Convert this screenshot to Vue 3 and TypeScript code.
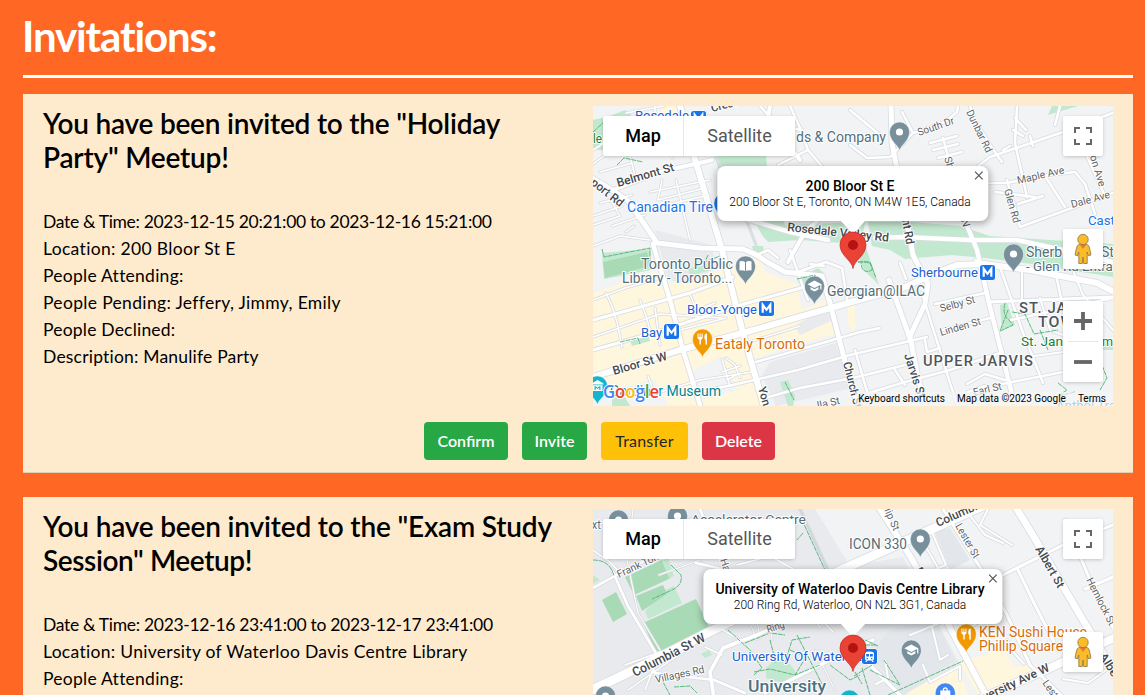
<script setup lang="ts">
interface Road { w: number; d: string; c?: string }
interface Area { f: string; d: string }
interface Label {
  t: string
  x: number
  y: number
  w: number
  s: number
  kind: string
  r?: number
}
interface Pin { x: number; y: number; f: string; icon: string }
interface Badge { x: number; y: number; icon: string }
interface MapData {
  top: number
  ground: string
  areas: Area[]
  roads: Road[]
  paths: string[]
  labels: Label[]
  pins: Pin[]
  badges: Badge[]
}
interface Line { text: string; ls: number }
interface Invitation {
  id: string
  title: Line[]
  details: Line[]
  place: string
  address: string
  map: MapData
}

const GREEN = '#c3e8d0'
const FIELD = '#a8dab5'
const YELLOW = '#fef6dd'
const SLATE = '#78909c'
const GREY = '#e8eaed'

const toronto: MapData = {
  top: 106,
  ground: '#f1f3f4',
  areas: [
    { f: YELLOW, d: 'M593 293L658 270L668 284L735 266L760 258L765 272L797 284L802 310L828 298L838 333L780 350L750 360L760 405H668L655 380L593 393Z' },
    { f: YELLOW, d: 'M660 106H680L686 124L666 128ZM848 305L855 303V335L848 325Z' },
    { f: '#f1f3f4', d: 'M690 372L720 357L738 390L700 400Z' },
    { f: GREY, d: 'M770 362L836 343L852 388L776 406L762 375ZM828 306L833 320L800 335L795 326Z' },
    { f: GREY, d: 'M655 230L712 245L716 268L690 284L668 280Z' },
    { f: GREEN, d: 'M602 253L650 249L651 270L604 279Z' },
    { f: FIELD, d: 'M603 262L647 252L650 266L605 278Z' },
    { f: GREEN, d: 'M593 120L610 116L625 110L632 116L603 132V150H593Z' },
    { f: GREEN, d: 'M714 154L766 154L768 180L785 225L865 222L862 240L866 250L842 243L800 240L768 242L762 235L755 222L743 212L722 180Z' },
    { f: GREEN, d: 'M868 222H912L960 226L990 236L1113 244V277L1070 270L1040 265L985 258L952 255L905 259L890 250L872 246Z' },
    { f: GREEN, d: 'M855 250L866 248L879 285L864 270ZM752 246L763 246L764 254L755 256Z' },
    { f: GREEN, d: 'M1048 115L1078 106H1052ZM630 340L648 334L650 341L632 346Z' },
    { f: GREEN, d: 'M688 269L712 262L714 269L690 276ZM780 382L788 380L795 396L793 406H788ZM797 279L818 268L824 273L804 292ZM1000 305L1007 303L1015 325L1002 331ZM1063 340H1113V350H1063ZM612 400L622 392L630 406H612Z' },
  ],
  roads: [
    { w: 1.5, d: 'M593 164L612 150L630 156L636 180M600 172L632 163M608 195L620 216L593 225M612 226L645 215M600 203L632 195M626 232L634 226M655 106V124L610 139L593 150M626 113L664 106M668 128L672 158M676 180L690 240M705 112L720 150M593 246L620 236L650 240M650 192L710 180M662 180L658 200L705 188M666 205L709 195M593 216L622 206' },
    { w: 1.5, d: 'M593 300L625 288L660 278M606 293L612 306L617 322L622 347M640 300L646 316L650 330M593 337L660 314L722 318M655 308L660 345M680 330L726 318M726 358L735 365L740 378M722 359L730 386M722 372L740 366M727 380L738 374M740 345L800 326M690 295L697 310L715 303M648 376L655 395M660 392L700 380L752 372' },
    { w: 1.5, d: 'M714 154L735 190L756 245', c: '#dde0e4' },
    { w: 3, d: 'M593 320L626 311L690 293L733 277M593 350L657 332L737 306L822 282' },
    { w: 2.5, d: 'M695 393L737 384L798 370L850 355L927 337M756 362L812 346L860 332L880 328M765 398L800 388L853 378L905 365' },
    { w: 2.5, d: 'M790 250L802 284L808 300M755 256L768 250L778 258M810 264L824 266M798 272L826 262L842 268L848 305' },
    { w: 2.5, d: 'M862 395L905 382L950 370L1003 352M940 348L927 352L925 340M922 293L935 335L957 405M935 304L985 293M943 330L990 318M997 385L1063 372M1000 267L1022 330L1043 383M1011 320L1113 298M1055 270L1061 298M900 263L906 279M855 350L868 395M895 370L905 385M967 384L985 374L1005 380M968 392L985 386L990 404' },
    { w: 2, d: 'M1005 360L1063 352M1022 268L1022 300M975 260L1000 266M1040 298L1050 330L1063 335M1072 268L1083 295L1113 330' },
    { w: 2.5, d: 'M790 106L800 128L808 150L778 165M808 150L830 176M760 106L778 126L802 130M850 110L880 135M850 145L867 158L890 157L913 133L945 122L957 112L958 106M902 112L913 133M930 143L957 136M933 150L958 144M938 158L962 152M943 138L954 178L963 216' },
    { w: 2.5, d: 'M977 167L990 157L1063 132L1113 113M970 106L975 120L990 145L1002 162M1017 106L1015 143L1027 197M1007 180L1020 227L1113 193M983 183L1007 183L1040 176L1075 172L1085 184L1095 214M1045 176L1065 207M1015 118L1026 130M1013 130L1023 136M1010 146L1003 150M1030 136L1033 146M1060 106L1055 125M1085 152L1105 196M995 192L1035 197M1018 204L1043 196' },
    { w: 5, d: 'M590 177L612 190L627 200L645 225L657 243L700 248L743 249L755 254L767 262L785 272L822 276L830 303L853 393L862 410' },
    { w: 4, d: 'M613 190L660 172L712 160M770 106L768 118L800 160M820 218L805 232L788 262' },
    { w: 4.5, d: 'M743 218L790 232L828 240M875 238L905 237L970 240L1017 240L1063 250L1113 262' },
    { w: 4.5, d: 'M653 244L670 300L683 350L700 405' },
    { w: 6, d: 'M593 377L680 350L750 331L855 301L903 288L933 274L957 265L983 264L1030 270L1097 283L1116 293' },
    { w: 6, d: 'M680 106L694 156L722 250L743 333L765 410' },
    { w: 5, d: 'M891 106L892 143L903 200L913 255L928 284L925 304L910 336L918 378L927 410M889 280L907 330L912 345' },
    { w: 4.5, d: 'M957 196L963 216L977 250L990 307L1014 402' },
    { w: 3, d: 'M988 302L1113 297' },
  ],
  paths: [
    'M593 132L603 123M617 165L624 158L643 162M602 249L604 257L650 248V262M858 262L870 262L876 278M858 262Q873 260 872 270Q862 275 861 263',
    'M1005 303Q1002 315 1009 320L1013 325L1000 331L1008 310M1012 312L1025 314L1034 334L1058 330M1040 330L1048 350M1058 383L1067 390L1058 396L1075 392M1100 360L1107 378L1100 390M785 382L794 400M797 279L815 275L818 292M708 255L705 262L720 256M620 342L638 338L640 344',
  ],
  labels: [
    { t: 'Rosedale', x: 635, y: 120, w: 54, s: 13, kind: 'transit' },
    { t: 'Cresc', x: 712, y: 112, w: 28, s: 11, kind: 'street', r: -14 },
    { t: 'le', x: 593, y: 143, w: 9, s: 13, kind: 'park' },
    { t: 'ds & Company', x: 796, y: 142, w: 90, s: 14, kind: 'poi' },
    { t: 'Belmont St', x: 618, y: 187, w: 59, s: 12, kind: 'street', r: -16 },
    { t: 'port Rd', x: 590, y: 184, w: 38, s: 12, kind: 'street', r: 38 },
    { t: 'Canadian Tire', x: 627, y: 212, w: 86, s: 14, kind: 'shop' },
    { t: 'South Dr', x: 919, y: 136, w: 38, s: 10.5, kind: 'minor', r: -19 },
    { t: 'Dunbar Rd', x: 966, y: 112, w: 46, s: 10.5, kind: 'minor', r: 64 },
    { t: 'She', x: 944, y: 158, w: 18, s: 10.5, kind: 'minor', r: 72 },
    { t: 'Maple Ave', x: 1018, y: 184, w: 48, s: 10.5, kind: 'minor', r: -13 },
    { t: 'Glen Rd', x: 1004, y: 190, w: 35, s: 10.5, kind: 'minor', r: 74 },
    { t: 'son Ave', x: 1088, y: 151, w: 38, s: 10.5, kind: 'minor', r: 73 },
    { t: 'Dale Ave', x: 1072, y: 208, w: 40, s: 10.5, kind: 'minor', r: -15 },
    { t: 'Castle', x: 1088, y: 225, w: 37, s: 13, kind: 'shop' },
    { t: 'Rosedale Valley Rd', x: 787, y: 231, w: 102, s: 12, kind: 'street', r: 6 },
    { t: 'nt Rd', x: 902, y: 220, w: 25, s: 12, kind: 'street', r: 80 },
    { t: 'N', x: 961, y: 220, w: 8, s: 11, kind: 'minor', r: 75 },
    { t: 'Toronto Public', x: 641, y: 269, w: 92, s: 14, kind: 'poi' },
    { t: 'Library - Toronto...', x: 622, y: 283, w: 110, s: 14, kind: 'poi' },
    { t: 'Georgian@ILAC', x: 827, y: 296, w: 98, s: 14, kind: 'poi' },
    { t: 'Sherb', x: 1026, y: 257, w: 36, s: 14, kind: 'poi' },
    { t: 'St', x: 1101, y: 257, w: 13, s: 14, kind: 'poi' },
    { t: '- Glen Rd Entrance', x: 1026, y: 271, w: 108, s: 13.5, kind: 'poi' },
    { t: 'Sherbourne', x: 911, y: 277, w: 67, s: 13, kind: 'transit' },
    { t: 'Bloor-Yonge', x: 687, y: 314, w: 70, s: 13, kind: 'transit' },
    { t: 'Bay', x: 641, y: 337, w: 21, s: 13, kind: 'transit' },
    { t: 'Eataly Toronto', x: 715, y: 349, w: 90, s: 14, kind: 'food' },
    { t: 'Gardiner Museum', x: 610, y: 396, w: 111, s: 14, kind: 'museum' },
    { t: 'Bloor St W', x: 614, y: 375, w: 56, s: 12, kind: 'street', r: -16 },
    { t: 'Church St', x: 843, y: 363, w: 47, s: 11.5, kind: 'street', r: 76 },
    { t: 'Yonge', x: 758, y: 388, w: 32, s: 11.5, kind: 'street', r: 74 },
    { t: 'Jarvis St', x: 904, y: 355, w: 46, s: 12, kind: 'street', r: 72 },
    { t: 'Selby St', x: 941, y: 312, w: 36, s: 10.5, kind: 'minor', r: -15 },
    { t: 'Linden St', x: 941, y: 336, w: 42, s: 10.5, kind: 'minor', r: -16 },
    { t: 'Earl St', x: 974, y: 396, w: 29, s: 10.5, kind: 'minor', r: -13 },
    { t: 'lla St', x: 818, y: 409, w: 23, s: 10.5, kind: 'minor', r: -13 },
    { t: 'UPPER JARVIS', x: 923, y: 366, w: 111, s: 14, kind: 'area' },
    { t: 'ST. JAMES', x: 1019, y: 313, w: 82, s: 14, kind: 'area' },
    { t: 'TOWN', x: 1038, y: 327, w: 50, s: 14, kind: 'area' },
    { t: 'St. Jan', x: 1021, y: 346, w: 42, s: 13.5, kind: 'park' },
    { t: 'm', x: 1102, y: 346, w: 11, s: 13.5, kind: 'park' },
    { t: 'Anthol Tra', x: 1056, y: 410, w: 60, s: 13, kind: 'shop' },
  ],
  pins: [
    { x: 899.5, y: 132, f: SLATE, icon: 'dot' },
    { x: 745.5, y: 266, f: SLATE, icon: 'book' },
    { x: 814.5, y: 286, f: SLATE, icon: 'cap' },
    { x: 1013.5, y: 254, f: SLATE, icon: 'dot' },
    { x: 702.5, y: 339, f: '#f29900', icon: 'food' },
    { x: 597.5, y: 386, f: '#12b5cb', icon: 'museum' },
    { x: 724, y: 203, f: '#1a73e8', icon: 'dot' },
  ],
  badges: [
    { x: 691, y: 111, icon: 'M' },
    { x: 759, y: 301, icon: 'M' },
    { x: 664, y: 324, icon: 'M' },
    { x: 980, y: 265, icon: 'M' },
  ],
}

const waterloo: MapData = {
  top: 509,
  ground: '#f1f3f4',
  areas: [
    { f: GREY, d: 'M593 509H815L850 566L903 557L960 665L925 695H593Z' },
    { f: '#f1f3f4', d: 'M815 509L850 563L975 509Z' },
    { f: '#e3e6ea', d: 'M890 630L935 618L955 660L905 695L870 655ZM935 532L950 528L970 560L950 570Z' },
    { f: FIELD, d: 'M625 577L662 560L671 578L634 595ZM602 600L616 592L627 614L613 622Z' },
    { f: GREEN, d: 'M662 561L668 558L674 576L669 578ZM665 590L674 586L682 603L648 619L645 611Z' },
    { f: FIELD, d: 'M636 596L663 585L667 594L642 611ZM643 623L696 599L709 627L657 654Z' },
    { f: GREEN, d: 'M701 654L709 650L712 655L705 658ZM766 668L774 660L790 664L800 678L782 683L766 678ZM593 575L600 580L593 584Z' },
    { f: YELLOW, d: 'M960 661L985 655L1002 647L1015 667L1035 663L1040 670L988 690L978 695L960 663ZM912 690L958 665L968 695H905Z' },
  ],
  roads: [
    { w: 1, d: 'M627 560L638 613L660 650M659 575L700 560M633 509L630 540M714 540L757 640M756 615L760 638M768 614L772 640M727 615L765 618M815 650L835 690' },
    { w: 1.5, d: 'M593 550L610 562L620 573M660 652L625 665M628 690L700 640M645 690L655 664M705 647L722 655M723 630L740 640M737 565L770 556L795 570M790 622L820 618L833 632M805 600L820 628' },
    { w: 2.5, d: 'M593 588L622 572L665 551M613 572L628 606L657 655M700 509L720 560M696 563L735 572M648 660L655 673L714 680M714 680L745 693' },
    { w: 3.5, d: 'M714 698L710 672L723 648L757 635L800 615M765 693L830 660L873 640' },
    { w: 3.5, d: 'M865 660L885 680L900 695' },
    { w: 2, d: 'M910 635L942 622M932 627L940 660L948 655M923 665L930 682M930 682L960 666L960 680M885 660L888 678L876 684M968 513L985 535L1003 543M850 568L890 550M988 509L980 525L1012 545M926 547L945 580M932 532L946 565L936 569M960 634L985 618L1002 612M1024 664L1015 654L1007 640M1063 679L1088 683L1113 665' },
    { w: 3, d: 'M943 509L983 572L1007 615L1030 665L1063 697M1003 575L1063 545L1113 525M1018 570L1035 605L1058 650M1065 520L1090 580L1113 628M1085 589L1113 577' },
    { w: 6, d: 'M880 509L910 556L938 605L963 652L987 697' },
    { w: 7, d: 'M1015 506L1037 542L1080 615L1116 675' },
    { w: 8, d: 'M950 712L987 696L1050 668L1116 637' },
    { w: 9, d: 'M588 692L640 667L707 633L765 605L850 566L910 539L985 505' },
    { w: 2, d: 'M800 509L828 570L855 632', c: '#d3d7db' },
  ],
  paths: [
    'M593 560Q610 560 614 576M671 565L681 575Q683 585 672 590L652 599M728 630L750 650L762 668L754 675M745 643L770 633L785 635M797 635L822 684M770 640L776 663M754 672L770 669L795 675L820 665M790 650L806 657L795 675M785 663L792 640L810 637M830 665L850 680L860 675',
    'M802 520L825 570M803 533L797 540M870 670L900 685M862 668L870 695M855 672L862 684M884 660L900 685M878 646L865 640M865 645L876 645M854 676L872 665M888 695L963 661M663 682L670 695M674 687L690 686L697 693',
  ],
  labels: [
    { t: 'ext', x: 586, y: 529, w: 15, s: 12, kind: 'poi' },
    { t: 'Accelerator Centre', x: 691, y: 524, w: 115, s: 13, kind: 'poi' },
    { t: 'ICON 330', x: 849, y: 549, w: 58, s: 14, kind: 'poi' },
    { t: 'Frank Tom', x: 619, y: 578, w: 48, s: 10.5, kind: 'minor', r: -25 },
    { t: 'Hag', x: 720, y: 560, w: 18, s: 10.5, kind: 'minor', r: 72 },
    { t: 'Columbia St W', x: 635, y: 677, w: 80, s: 13, kind: 'street', r: -27 },
    { t: 'Villages Rd', x: 656, y: 683, w: 50, s: 10.5, kind: 'minor', r: -12 },
    { t: 'Ring', x: 768, y: 633, w: 18, s: 10.5, kind: 'minor', r: -18 },
    { t: 'Phillip St', x: 877, y: 494, w: 41, s: 10.5, kind: 'minor', r: 66 },
    { t: 'Columbia', x: 938, y: 527, w: 50, s: 12, kind: 'street', r: -24 },
    { t: 'Lester St', x: 955, y: 526, w: 38, s: 10.5, kind: 'minor', r: 60 },
    { t: 'Albert St', x: 1035, y: 549, w: 46, s: 12, kind: 'street', r: 60 },
    { t: 'Hemlock St', x: 1086, y: 580, w: 52, s: 10.5, kind: 'minor', r: 63 },
    { t: 'P', x: 915, y: 570, w: 8, s: 11, kind: 'street', r: 60 },
    { t: 'Albert', x: 1099, y: 656, w: 34, s: 11.5, kind: 'street', r: 58 },
    { t: 'University Of Waterloo', x: 732, y: 661, w: 133, s: 13, kind: 'transit' },
    { t: 'University', x: 748, y: 692, w: 78, s: 17, kind: 'campus' },
    { t: 'KEN Sushi House', x: 979, y: 637, w: 108, s: 14, kind: 'food' },
    { t: 'Phillip Square', x: 979, y: 651, w: 84, s: 14, kind: 'food' },
    { t: 'versity Ave W', x: 985, y: 701, w: 72, s: 12, kind: 'street', r: -25 },
    { t: 'Lester', x: 1042, y: 683, w: 28, s: 10.5, kind: 'minor', r: 55 },
  ],
  pins: [
    { x: 618.5, y: 520, f: SLATE, icon: 'dot' },
    { x: 677.5, y: 516, f: SLATE, icon: 'dot' },
    { x: 918.5, y: 539, f: SLATE, icon: 'dot' },
    { x: 909.5, y: 650, f: SLATE, icon: 'cap' },
    { x: 964.5, y: 634, f: '#f29900', icon: 'food' },
    { x: 605.5, y: 696, f: SLATE, icon: 'dot' },
    { x: 943.5, y: 693, f: '#4285f4', icon: 'bag' },
    { x: 849.5, y: 700, f: '#12b5cb', icon: 'dot' },
  ].map((p) => (p.x > 900 ? { ...p, x: p.x + 1.8 } : p)),
  badges: [{ x: 862, y: 649, icon: 'train' }],
}

const invitations: Invitation[] = [
  {
    id: 'holiday',
    title: [
      { text: 'You have been invited to the "Holiday', ls: -0.22 },
      { text: 'Party" Meetup!', ls: -0.2 },
    ],
    details: [
      { text: 'Date & Time: 2023-12-15 20:21:00 to 2023-12-16 15:21:00', ls: -0.33 },
      { text: 'Location: 200 Bloor St E', ls: 0.33 },
      { text: 'People Attending:', ls: 0.25 },
      { text: 'People Pending: Jeffery, Jimmy, Emily', ls: 0.33 },
      { text: 'People Declined:', ls: 0.2 },
      { text: 'Description: Manulife Party', ls: 0.2 },
    ],
    place: '200 Bloor St E',
    address: '200 Bloor St E, Toronto, ON M4W 1E5, Canada',
    map: toronto,
  },
  {
    id: 'exam',
    title: [
      { text: 'You have been invited to the "Exam Study', ls: -0.18 },
      { text: 'Session" Meetup!', ls: -0.4 },
    ],
    details: [
      { text: 'Date & Time: 2023-12-16 23:41:00 to 2023-12-17 23:41:00', ls: -0.31 },
      { text: 'Location: University of Waterloo Davis Centre Library', ls: 0.3 },
      { text: 'People Attending:', ls: 0.25 },
    ],
    place: 'University of Waterloo Davis Centre Library',
    address: '200 Ring Rd, Waterloo, ON N2L 3G1, Canada',
    map: waterloo,
  },
]

const actions = [
  { label: 'Confirm', kind: 'confirm' },
  { label: 'Invite', kind: 'invite' },
  { label: 'Transfer', kind: 'transfer' },
  { label: 'Delete', kind: 'delete' },
]
</script>

<template>
  <main class="page">
    <h1>Invitations:</h1>
    <div class="rule"></div>
    <section v-for="inv in invitations" :key="inv.id" class="card">
      <div class="row">
        <div class="info">
          <h3>
            <span v-for="l in inv.title" :key="l.text" class="line" :style="{ letterSpacing: l.ls + 'px' }">{{ l.text }}</span>
          </h3>
          <p v-for="l in inv.details" :key="l.text" :style="{ letterSpacing: l.ls + 'px' }">{{ l.text }}</p>
        </div>
        <div class="map">
          <svg class="tiles" width="520" height="300" :viewBox="`593 ${inv.map.top} 520 300`">
            <rect x="593" :y="inv.map.top" width="520" height="300" :fill="inv.map.ground" />
            <path v-for="(a, i) in inv.map.areas" :key="'a' + i" :d="a.d" :fill="a.f" />
            <path v-for="(r, i) in inv.map.roads" :key="'c' + i" :d="r.d" class="road" stroke="#d9dce0" :stroke-width="r.w + 1.6" />
            <path v-for="(r, i) in inv.map.roads" :key="'r' + i" :d="r.d" class="road" :stroke="r.c ?? '#fff'" :stroke-width="r.w" />
            <path v-for="(p, i) in inv.map.paths" :key="'p' + i" :d="p" class="trail" />
            <text
              v-for="(l, i) in inv.map.labels"
              :key="'l' + i"
              :class="['lbl', l.kind]"
              :font-size="l.s"
              :textLength="l.w"
              lengthAdjust="spacingAndGlyphs"
              :transform="`translate(${l.x} ${l.y}) rotate(${l.r ?? 0})`"
            >{{ l.t }}</text>
            <g v-for="(b, i) in inv.map.badges" :key="'b' + i" :transform="`translate(${b.x} ${b.y})`">
              <rect x="-.5" y="-.5" width="16" height="16" rx="3" fill="#fff" />
              <rect width="15" height="15" rx="2.5" fill="#1a73e8" />
              <path v-if="b.icon === 'M'" d="M3.7 11.7V3.8L7.5 8.8L11.3 3.8V11.7" fill="none" stroke="#fff" stroke-width="2.2" />
              <g v-else fill="#fff">
                <path d="M3 4.5Q3 2.5 7.5 2.5T12 4.5V10Q12 11.4 10.5 11.5L12 13H10.5L9.3 11.6H5.7L4.5 13H3L4.5 11.5Q3 11.4 3 10Z" />
                <path d="M4.2 5H7V7.6H4.2ZM8 5H10.8V7.6H8ZM4.6 9H6V10.3H4.6ZM9 9H10.4V10.3H9Z" fill="#1a73e8" />
              </g>
            </g>
            <g v-for="(p, i) in inv.map.pins" :key="'n' + i" :transform="`translate(${p.x} ${p.y})`">
              <path d="M0 18.5C-1.6 12.5-10 9-10 0A10 10 0 0 1 10 0C10 9 1.6 12.5 0 18.5Z" :fill="p.f" stroke="#fff" stroke-opacity=".6" stroke-width=".7" />
              <circle v-if="p.icon === 'dot'" r="3.6" fill="#fff" />
              <path v-else-if="p.icon === 'book'" d="M-6-4.5Q-3-5.5-.5-4V5Q-3 3.6-6 4.5ZM6-4.5Q3-5.5.5-4V5Q3 3.6 6 4.5Z" fill="#fff" />
              <path v-else-if="p.icon === 'cap'" d="M0-5.5L7-1.8V3.5H5.8V-1L0 2L-7-1.8ZM-4 1L0 3.2L4 1V3.5L0 5.5L-4 3.5Z" fill="#fff" />
              <path v-else-if="p.icon === 'food'" d="M-5-5.5V-1.5Q-5 .5-3 .8V5.5H-1.6V.8Q.2.5.2-1.5V-5.5H-.9V-2H-1.9V-5.5H-2.9V-2H-3.9V-5.5ZM2-3Q2-5.5 4.5-5.5V5.5H3V.5H2Z" fill="#fff" />
              <path v-else-if="p.icon === 'museum'" d="M0-6L6-2.5V-1.5H-6V-2.5ZM-5-.7H5V5H-5ZM-3 4H-1.8V1.7L0 3L1.8 1.7V4H3V.3H2L0 1.7L-2 .3H-3Z" fill-rule="evenodd" fill="#fff" />
              <path v-else d="M-5-2.5H-2.6Q-2.5-5.8 0-5.8T2.6-2.5H5V5H-5ZM-1.4-2.5H1.4Q1.2-4.5 0-4.5T-1.4-2.5Z" fill-rule="evenodd" fill="#fff" />
            </g>
            <text class="google" x="603" :y="inv.map.top + 292" font-size="18" textLength="56" lengthAdjust="spacingAndGlyphs"><tspan fill="#4285f4">G</tspan><tspan fill="#ea4335">o</tspan><tspan fill="#fbbc04">o</tspan><tspan fill="#4285f4">g</tspan><tspan fill="#34a853">l</tspan><tspan fill="#ea4335">e</tspan></text>
          </svg>

          <div class="bubble">
            <b>{{ inv.place }}</b>
            <span>{{ inv.address }}</span>
            <svg class="close" width="9" height="9" viewBox="0 0 9 9"><path d="M.7.7L8.3 8.3M8.3.7L.7 8.3" stroke="#555" stroke-width="1.2" /></svg>
          </div>
          <svg class="marker" width="28" height="50" viewBox="0 0 28 50">
            <path d="M1 -1H27L14 13Z" fill="#fff" />
            <path d="M14 47.5C13.2 39.5 1 34.5 1 24A13 13 0 0 1 27 24C27 34.5 14.8 39.5 14 47.5Z" fill="#ea4335" stroke="#c5221f" stroke-width=".7" />
            <circle cx="14" cy="24" r="5" fill="#b31412" />
          </svg>

          <div class="types"><span class="on">Map</span><span>Satellite</span></div>
          <div class="ctl full">
            <svg width="18" height="18" viewBox="0 0 18 18"><path d="M1 6V1H6M12 1H17V6M17 12V17H12M6 17H1V12" fill="none" stroke="#666" stroke-width="2" /></svg>
          </div>
          <div class="ctl peg">
            <svg width="18" height="32" viewBox="0 0 18 32">
              <path d="M5 11.5H13Q15 12 15.5 15L17 22L14.5 22.8L13.2 19V30.5H9.7L9 24L8.3 30.5H4.8V19L3.5 22.8L1 22L2.5 15Q3 12 5 11.5Z" fill="#fbbc2c" stroke="#8a7444" stroke-width=".8" />
              <path d="M5.5 11.5H12.5L9 16Z" fill="#e37f2c" />
              <circle cx="9" cy="6.5" r="5.2" fill="#fbbc2c" stroke="#8a7444" stroke-width=".8" />
            </svg>
          </div>
          <div class="ctl zoom">
            <svg width="18" height="18" viewBox="0 0 18 18"><path d="M9 0V18M0 9H18" stroke="#666" stroke-width="3.8" /></svg>
            <i></i>
            <svg width="18" height="18" viewBox="0 0 18 18"><path d="M0 9H18" stroke="#666" stroke-width="3.8" /></svg>
          </div>
          <div class="legal"><span>Keyboard shortcuts</span><span>Map data ©2023 Google</span><span>Terms</span></div>
        </div>
      </div>
      <div class="actions">
        <button v-for="a in actions" :key="a.label" :class="a.kind">{{ a.label }}</button>
      </div>
    </section>
  </main>
</template>

<style>
html,
body {
  margin: 0;
  height: 695px;
  overflow: hidden;
  background: #ff6725;
}
</style>

<style scoped>
.page {
  box-sizing: border-box;
  height: 695px;
  overflow: hidden;
  padding: 12px 12px 0 23px;
  background: #ff6725;
  color: #000;
  font-family: Lato, "Liberation Sans", sans-serif;
}
h1 {
  margin: 0 0 15px -1px;
  height: 48px;
  font-size: 42px;
  line-height: 49px;
  font-weight: 700;
  letter-spacing: -1.15px;
  color: #fff;
  white-space: nowrap;
}
.rule {
  height: 3px;
  background: #fff;
  margin-bottom: 16px;
}
.card {
  box-sizing: border-box;
  height: 379px;
  margin-bottom: 24px;
  padding: 12px 20px 0;
  background: #feebcd;
  border-bottom: 1px solid #dfcfb4;
}
.row {
  display: flex;
  height: 300px;
}
.info {
  width: 550px;
}
h3 {
  margin: 0 0 34px;
  font-size: 28px;
  line-height: 34px;
  font-weight: 600;
  white-space: nowrap;
}
.line {
  display: block;
}
p {
  margin: 0;
  font-size: 17.5px;
  line-height: 27px;
  white-space: nowrap;
}
.map {
  position: relative;
  width: 520px;
  height: 300px;
  overflow: hidden;
  font-family: Roboto, sans-serif;
}
.tiles {
  display: block;
}
.road {
  fill: none;
  stroke-linejoin: round;
  stroke-linecap: round;
}
.trail {
  fill: none;
  stroke: #4db374;
  stroke-width: 0.9;
  stroke-dasharray: 5 0.8;
}
.lbl {
  font-family: Roboto, sans-serif;
  paint-order: stroke;
  stroke: #fff;
  stroke-width: 2px;
  stroke-linejoin: round;
}
.transit { fill: #1a5fd0; }
.shop { fill: #1a73e8; }
.poi { fill: #546e7a; }
.park { fill: #188038; }
.food { fill: #d56e0c; }
.museum { fill: #00838f; }
.street { fill: #45494d; font-weight: 500; }
.minor { fill: #5f6368; }
.area { fill: #50555a; font-weight: 500; letter-spacing: 1px; }
.campus { fill: #4a7280; font-weight: 500; }
.google {
  font-family: "Open Sans", sans-serif;
  font-weight: 600;
  paint-order: stroke;
  stroke: #fff;
  stroke-width: 2px;
}
.bubble {
  position: absolute;
  top: 60px;
  left: 260px;
  transform: translateX(-50%);
  box-sizing: border-box;
  height: 55px;
  padding: 12px 18px 0 12px;
  background: #fff;
  border-radius: 8px;
  box-shadow: 0 2px 7px 1px rgba(0, 0, 0, 0.3);
  text-align: center;
  white-space: nowrap;
  color: #000;
}
.bubble b {
  display: block;
  font-size: 14px;
  line-height: 17px;
  font-weight: 500;
  letter-spacing: 0.04px;
}
.bubble span {
  display: block;
  font-size: 12px;
  line-height: 14px;
  font-weight: 300;
}
.close {
  position: absolute;
  top: 5px;
  right: 5px;
}
.marker {
  position: absolute;
  left: 246px;
  top: 115px;
}
.types {
  position: absolute;
  left: 10px;
  top: 10px;
  display: flex;
  width: 192px;
  height: 40px;
  background: #fff;
  border-radius: 2px;
  box-shadow: 0 1px 4px -1px rgba(0, 0, 0, 0.3);
  font-size: 18px;
  line-height: 40px;
  text-align: center;
  color: #565656;
}
.types span {
  flex: 1;
}
.types .on {
  flex: 0 0 80px;
  border-right: 1px solid #e8e8e8;
  color: #000;
  font-weight: 500;
}
.ctl {
  position: absolute;
  right: 10px;
  width: 40px;
  height: 40px;
  display: flex;
  flex-direction: column;
  align-items: center;
  justify-content: center;
  background: #fff;
  border-radius: 2px;
  box-shadow: 0 1px 4px -1px rgba(0, 0, 0, 0.3);
}
.full { top: 10px; }
.peg { top: 123px; }
.zoom {
  top: 195px;
  height: 81px;
  justify-content: space-evenly;
}
.zoom i {
  width: 30px;
  height: 1px;
  background: #e6e6e6;
}
.legal {
  position: absolute;
  right: 0;
  bottom: 0;
  display: flex;
  gap: 12px;
  padding: 0 7px 0 3px;
  height: 14px;
  background: rgba(245, 245, 245, 0.7);
  font-size: 10px;
  line-height: 14px;
  color: #000;
  white-space: nowrap;
}
.actions {
  display: flex;
  justify-content: flex-start;
  gap: 14px;
  padding: 16px 0 0 381px;
}
button {
  width: 84px;
  height: 38px;
  padding: 0;
  border: 0;
  border-radius: 4px;
  background: #28a745;
  color: #fff;
  font: 600 16px/38px Lato, sans-serif;
}
.invite { width: 65px; }
.transfer {
  width: 87px;
  background: #ffc107;
  color: #212529;
  font-weight: 400;
  letter-spacing: 0.2px;
}
.delete {
  width: 73px;
  background: #dc3545;
}
</style>
